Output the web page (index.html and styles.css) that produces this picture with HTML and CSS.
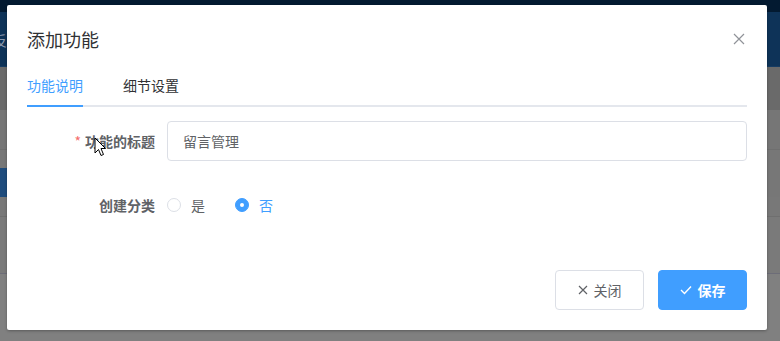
FILE: index.html
```html
<!DOCTYPE html>
<html lang="zh-CN">
<head>
  <meta charset="UTF-8">
  <title>添加功能</title>
  <link rel="stylesheet" href="styles.css">
</head>
<body>

  <!-- dimmed page behind the dialog -->
  <div class="page">
    <div class="topbar"></div>
    <div class="header"><span class="brand">反</span></div>
    <div class="band band-dark"></div>
    <div class="band band-row"></div>
    <div class="band band-row2"></div>
    <div class="band band-menu"><div class="menu-active"></div></div>
    <div class="band band-row3"></div>
    <div class="band band-row4"></div>
    <div class="band band-foot"></div>
  </div>

  <div class="dialog">
    <div class="dialog-header">
      <span class="dialog-title">添加功能</span>
      <svg class="dialog-close" width="12" height="12" viewBox="0 0 12 12">
        <path d="M1 1 L11 11 M11 1 L1 11" stroke="#909399" stroke-width="1.2" fill="none"/>
      </svg>
    </div>

    <div class="dialog-body">
      <div class="tabs">
        <div class="tab active">功能说明</div>
        <div class="tab">细节设置</div>
      </div>

      <form class="form">
        <div class="form-item">
          <label class="form-label"><span class="required">*</span>功能的标题</label>
          <div class="form-content">
            <input class="input" type="text" value="留言管理">
          </div>
        </div>
        <div class="form-item">
          <label class="form-label">创建分类</label>
          <div class="form-content">
            <span class="radio"><span class="radio-inner"></span><span class="radio-label">是</span></span>
            <span class="radio checked"><span class="radio-inner"></span><span class="radio-label">否</span></span>
          </div>
        </div>
      </form>
    </div>

    <div class="dialog-footer">
      <button class="btn" type="button">
        <svg width="10" height="10" viewBox="0 0 10 10"><path d="M1 1 L9 9 M9 1 L1 9" stroke="#606266" stroke-width="1.2" fill="none"/></svg>
        关闭
      </button>
      <button class="btn btn-primary" type="button">
        <svg width="12" height="10" viewBox="0 0 12 10"><path d="M1 5 L4.5 8.5 L11 1.5" stroke="#fff" stroke-width="1.4" fill="none"/></svg>
        保存
      </button>
    </div>
  </div>

  <svg class="cursor" width="13" height="20" viewBox="0 0 13 20">
    <path d="M1 1 L1 16 L4.5 12.5 L7 18.5 L9.5 17.5 L7 11.5 L11.5 11.5 Z" fill="#fff" stroke="#000" stroke-width="1"/>
  </svg>

</body>
</html>
```

FILE: styles.css
```css
* {
  box-sizing: border-box;
}
body {
  margin: 0;
  width: 780px;
  height: 341px;
  overflow: hidden;
  font-family: "Noto Sans CJK SC", "Noto Sans", sans-serif;
  font-size: 14px;
  color: #606266;
  position: relative;
  background-color: #808080;
}

/* page behind the mask */
.page {
  display: flex;
  flex-direction: column;
}
.topbar { height: 12px; background-color: #031a31; }
.header {
  height: 55px;
  background-color: #0e3358;
  border-bottom: 1px solid #163c63;
  padding-top: 19px;
}
.brand {
  display: block;
  margin-left: -7px;
  color: #8e9bb0;
  font-size: 14px;
  line-height: 18px;
}
.band { border-bottom: 1px solid #6f6f6f; }
.band-dark { height: 43px; background-color: #6a6a6a; border-bottom: 0; }
.band-row { height: 40px; background-color: #767676; }
.band-row2 { height: 18px; background-color: #777777; border-bottom: 0; }
.band-menu { height: 29px; background-color: #777777; border-bottom: 0; }
.menu-active { width: 120px; height: 100%; background-color: #1f4c7d; }
.band-row3 { height: 20px; background-color: #787878; }
.band-row4 { height: 57px; background-color: #7a7a7a; border-bottom-color: #6d6d78; }
.band-foot { flex: 1; background-color: #808080; border-bottom: 0; }

/* dialog */
.dialog {
  position: absolute;
  left: 7px;
  top: 5px;
  width: 760px;
  height: 325px;
  background-color: #fff;
  border-radius: 2px;
  box-shadow: 0 1px 3px rgba(0, 0, 0, 0.3);
  display: flex;
  flex-direction: column;
}
.dialog-header {
  display: flex;
  justify-content: space-between;
  align-items: center;
  padding: 22px 22px 0 20px;
}
.dialog-title {
  font-size: 18px;
  line-height: 24px;
  color: #303133;
}
.dialog-body {
  padding: 0 20px;
  flex: 1;
}

.tabs {
  display: flex;
  gap: 40px;
  margin-top: 14px;
  height: 42px;
  border-bottom: 2px solid #e4e7ed;
}
.tab {
  line-height: 40px;
  color: #303133;
  font-size: 14px;
  margin-bottom: -2px;
  border-bottom: 2px solid transparent;
}
.tab.active {
  color: #409eff;
  border-bottom-color: #409eff;
}

.form {
  margin-top: 14px;
}
.form-item {
  display: flex;
  align-items: center;
  height: 40px;
  margin-bottom: 24px;
}
.form-label {
  width: 140px;
  padding-right: 12px;
  text-align: right;
  font-weight: bold;
  color: #606266;
}
.required {
  color: #f56c6c;
  margin-right: 4px;
  font-weight: normal;
}
.form-content {
  flex: 1;
  display: flex;
  align-items: center;
}
.input {
  width: 100%;
  height: 40px;
  border: 1px solid #dcdfe6;
  border-radius: 4px;
  padding: 0 15px;
  font-family: inherit;
  font-size: 14px;
  color: #606266;
  outline: none;
}

.radio {
  display: inline-flex;
  align-items: center;
  margin-right: 30px;
  color: #606266;
}
.radio-inner {
  width: 14px;
  height: 14px;
  border: 1px solid #dcdfe6;
  border-radius: 50%;
  position: relative;
}
.radio-label {
  padding-left: 10px;
}
.radio.checked .radio-inner {
  background-color: #409eff;
  border-color: #409eff;
}
.radio.checked .radio-inner::after {
  content: "";
  position: absolute;
  left: 4px;
  top: 4px;
  width: 4px;
  height: 4px;
  border-radius: 50%;
  background-color: #fff;
}
.radio.checked .radio-label {
  color: #409eff;
}

.dialog-footer {
  display: flex;
  justify-content: flex-end;
  gap: 14px;
  padding: 0 20px 20px;
}
.btn {
  width: 89px;
  height: 40px;
  border: 1px solid #dcdfe6;
  border-radius: 4px;
  background-color: #fff;
  color: #606266;
  font-family: inherit;
  font-size: 14px;
  display: flex;
  align-items: center;
  justify-content: center;
  gap: 6px;
}
.btn-primary {
  background-color: #409eff;
  border-color: #409eff;
  color: #fff;
  font-weight: bold;
}

.cursor {
  position: absolute;
  left: 94px;
  top: 137px;
}
```
